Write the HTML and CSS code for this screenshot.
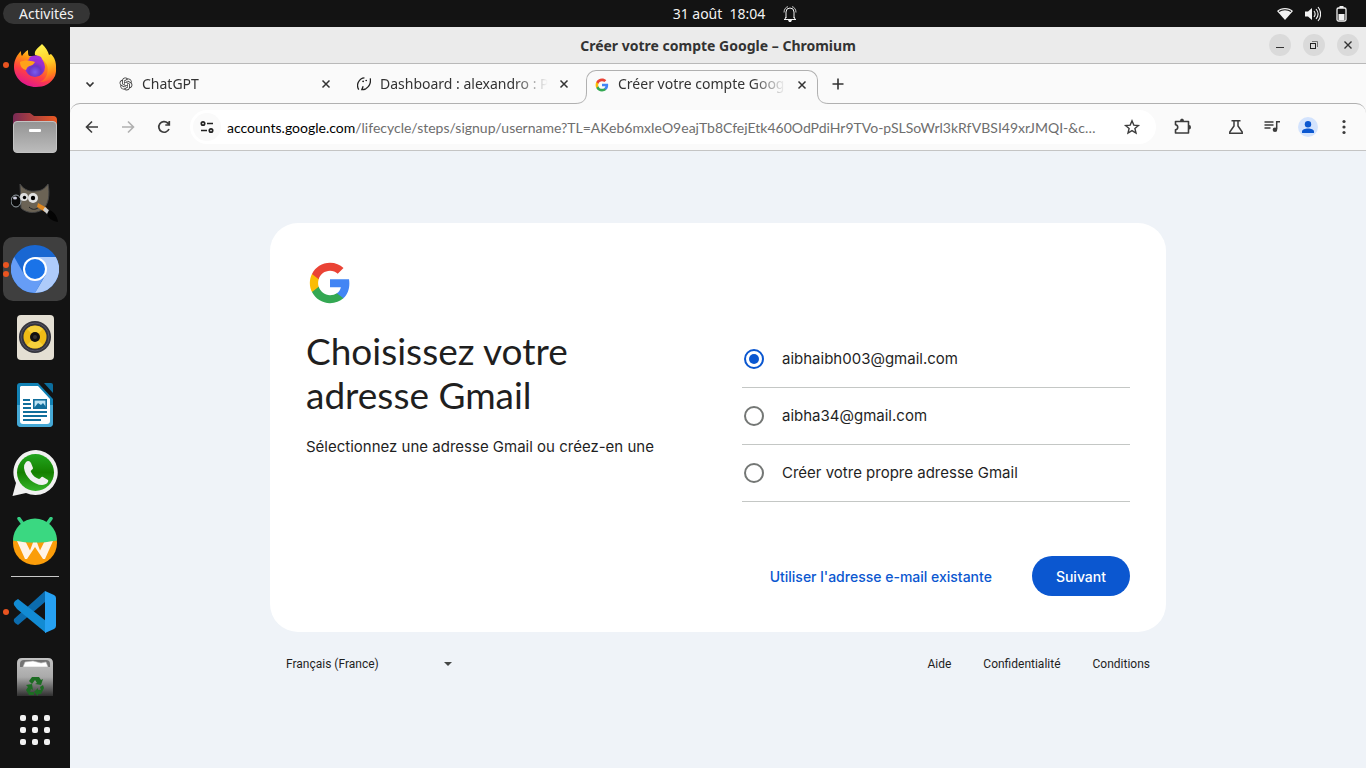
FILE: index.html
```html
<!DOCTYPE html>
<html lang="fr">
<head>
<meta charset="utf-8">
<meta name="viewport" content="width=device-width, initial-scale=1">
<title>Créer votre compte Google</title>
<link rel="stylesheet" href="styles.css">
</head>
<body>
<div class="desktop">
  <header class="topbar">
    <button class="activities" type="button">Activités</button>
    <div class="clock">
      <time>31 août&nbsp; 18:04</time>
      <svg class="bell" viewBox="0 0 14 16" aria-hidden="true"><g fill="none" stroke="#f2f2f2"><path d="M3 12V6a4 4 0 0 1 8 0v6M1 13.500h12M2 13l1-2M12 13l-1-2"/><path d="M1 6.500C1 3 3 1 5 .7M13 6.500C13 3 11 1 9 .7" stroke-width=".8"/></g><path d="M5 14h4l-1 2H6z" fill="#f2f2f2"/></svg>
    </div>
    <div class="status">
      <svg width="16" height="16" viewBox="0 0 16 16"><path d="M0 5C4 1 12 1 16 5L8 14z" fill="#f2f2f2"/><path d="M2 5.500C5 3.200 11 3.200 14 5.500" fill="none" stroke="#131313" stroke-width="1.100"/></svg>
      <svg width="16" height="16" viewBox="0 0 16 16"><path d="M0 5.500h3L7 2v12l-4-3.500H0z" fill="#f2f2f2"/><path d="M9 5c1.500 2 1.500 4 0 6M11 3c2.500 3 2.500 7 0 10M13 1c3.500 4 3.500 10 0 14" fill="none" stroke="#f2f2f2" stroke-width="1.100"/></svg>
      <svg width="16" height="16" viewBox="0 0 16 16"><rect x="4" y="2" width="9" height="13" rx="1.500" fill="none" stroke="#f2f2f2" stroke-width="1.300"/><path d="M6.500 0h4v2h-4zM5.500 8h6v6h-6z" fill="#f2f2f2"/></svg>
    </div>
  </header>

  <nav class="dock" aria-label="Applications">
    <button class="app running" type="button" aria-label="Firefox">
      <svg viewBox="0 0 48 48">
        <defs>
          <linearGradient id="fx" x1=".8" y1=".1" x2=".35" y2="1"><stop offset="0" stop-color="#fff44f"/><stop offset=".3" stop-color="#ff980e"/><stop offset=".65" stop-color="#ff3f45"/><stop offset="1" stop-color="#e01590"/></linearGradient>
          <radialGradient id="fxp" cx=".5" cy=".75"><stop offset="0" stop-color="#7a5cf0"/><stop offset=".6" stop-color="#6a35c4"/><stop offset="1" stop-color="#9b2fd0"/></radialGradient>
          <linearGradient id="fxy" x1=".4" y1="0" x2=".6" y2="1"><stop offset="0" stop-color="#fff44f"/><stop offset=".5" stop-color="#ffcb25"/><stop offset=".8" stop-color="#ff8a16"/><stop offset="1" stop-color="#ff4a3c"/></linearGradient>
        </defs>
        <path d="M10 10c0 2 0 4 1 5 2-3 3-4 6-6 0 3 0 5 1 6h21l4 4c2 5 3 11 1 16-4 8-11 11-19 11C13 46 3 37 3 26 3 19 6 14 10 10z" fill="url(#fx)"/>
        <path d="M31 3c4 4 6 7 7 11l2-1c4 4 5 8 5 13 0 10-7 15-16 15 7-3 9-11 7-17-2-5-7-8-12-10-1-5 3-7 7-11z" fill="url(#fxy)"/>
        <circle cx="24" cy="26" r="10" fill="url(#fxp)"/>
        <path d="M18 17c3-3 8-3 12-1l3 6c-5-5-10-4-13-2z" fill="#a430dc"/>
        <path d="M9 21c4-2 9-2 15 0-3 5-6 3-8 6l-1 2c-4-1-6-4-6-8z" fill="#ffa21a"/>
      </svg>
      <span class="dots"><i></i></span>
    </button>
    <button class="app" type="button" aria-label="Fichiers">
      <svg viewBox="0 0 48 48">
        <defs><linearGradient id="fd"><stop offset="0" stop-color="#782a55"/><stop offset="1" stop-color="#eb5a22"/></linearGradient><linearGradient id="fg" x1="0" y1="0" x2="0" y2="1"><stop offset="0" stop-color="#939393"/><stop offset="1" stop-color="#bcbcbc"/></linearGradient></defs>
        <path d="M2 8q0-4 4-4h13l4 3h19q4 0 4 4v14H2z" fill="url(#fd)"/>
        <rect x="2.500" y="12.500" width="43" height="31" rx="3.500" fill="url(#fg)" stroke="#c3c3c3"/>
        <rect x="18" y="20" width="12" height="3" rx="1" fill="#fff"/>
      </svg>
    </button>
    <button class="app" type="button" aria-label="GIMP">
      <svg viewBox="0 0 48 48">
        <path d="M9 7c4 6 10 8 16 7 6 0 9-3 12-7 2 10 1 21-6 26-7 4-16 3-21-2z" fill="#6b6355" stroke="#454545"/>
        <ellipse cx="5" cy="24" rx="5" ry="6" fill="#0a0a0a" stroke="#9aa5ab"/><ellipse cx="4" cy="21" rx="2" ry="1.500" fill="#ccd"/>
        <circle cx="13" cy="20" r="4" fill="#dedede"/><circle cx="22" cy="21" r="5" fill="#e2e2e2"/>
        <circle cx="13.500" cy="20.500" r="1.700"/><circle cx="22" cy="21" r="2.200"/>
        <path d="M18 30c4 4 8 2 10 0" stroke="#222" fill="none"/>
        <path d="M27 26l9 5-2 4-8-5z" fill="#e08820"/><path d="M34 30l5 4-2 4-5-5z" fill="#cfcfcf"/>
        <path d="M38 33c4 1 8 5 9 12-6-1-10-4-11-8z" fill="#040404"/>
      </svg>
    </button>
    <button class="app current" type="button" aria-label="Chromium">
      <svg viewBox="0 0 48 48">
        <circle cx="24" cy="24" r="24" fill="#1967d2"/>
        <path d="M3.200 12A24 24 0 0 0 24 48L34 30 24 24 14 31z" fill="#669df6"/>
        <path d="M24 12h20.800A24 24 0 0 1 24 48L34.500 30z" fill="#aecbfa"/>
        <circle cx="24" cy="24" r="12" fill="#fff"/><circle cx="24" cy="24" r="10" fill="#1a73e8"/>
      </svg>
      <span class="dots"><i></i><i></i></span>
    </button>
    <button class="app" type="button" aria-label="Rhythmbox">
      <svg viewBox="0 0 48 48">
        <rect x="6" y="2" width="37" height="45" rx="4" fill="#e4dfd3"/><circle cx="24" cy="24" r="16" fill="#34343c"/><circle cx="24" cy="24" r="14" fill="none" stroke="#565565"/>
        <circle cx="24" cy="24" r="11.500" fill="#efbb16"/><path d="M24 24l-8 8a11.500 11.500 0 0 0 16 0zM24 24l-8-8a11.500 11.500 0 0 1 16 0z" fill="#f6d13c"/><circle cx="24" cy="24" r="5" fill="#111"/><circle cx="24" cy="24" r="2" fill="#333"/>
      </svg>
    </button>
    <button class="app" type="button" aria-label="LibreOffice Writer">
      <svg viewBox="0 0 48 48">
        <path d="M9 2h18l15 16v24q0 4-4 4H10q-4 0-4-4V5q0-3 3-3z" fill="#1282b5"/><path d="M6 24h36v18q0 4-4 4H10q-4 0-4-4z" fill="#46a9d6"/>
        <path d="M10 5h17l12 13v22q0 3-3 3H12q-3 0-3-3V6z" fill="#fff"/>
        <path d="M33 2h7q2 0 2 2v8z" fill="#0c6e9e"/>
        <path d="M12 18h7v2h-7zM12 22h8v2h-8zM12 26h8v2h-8zM12 30h24v2H12zM12 34h24v2H12zM12 38h18v2H12z" fill="#116e9b"/>
        <rect x="22.800" y="18.800" width="12.400" height="8.400" fill="#bde4f5" stroke="#116e9b" stroke-width="1.600"/><path d="M23 27l4-5 3 2 2-2 3 4v1z" fill="#116e9b"/>
      </svg>
    </button>
    <button class="app" type="button" aria-label="WhatsApp">
      <svg viewBox="0 0 48 48">
        <defs><linearGradient id="wa" x1="0" y1="0" x2="0" y2="1"><stop offset="0" stop-color="#23a620"/><stop offset=".5" stop-color="#158000"/><stop offset="1" stop-color="#35b52a"/></linearGradient></defs>
        <path d="M25 1a22.500 22.500 0 1 1-10 43L1.500 47 5 34A22.500 22.500 0 0 1 25 1z" fill="#f1f1f1"/><circle cx="24.500" cy="23.500" r="18.500" fill="url(#wa)"/>
        <path d="M15 13c2-2 4-1 5 1l2 5c0 2-3 2-2 4 2 4 5 6 8 7 2 0 2-3 4-2l5 3c1 1-1 5-6 5-8 0-17-8-18-17q0-4 2-6z" fill="#f1f1f1"/>
      </svg>
    </button>
    <button class="app" type="button" aria-label="Waydroid">
      <svg viewBox="0 0 48 48">
        <path d="M8 1.500l5 7M40 1.500l-5 7" stroke="#35ce82" stroke-width="3.500" stroke-linecap="round"/>
        <circle cx="24" cy="26" r="22" fill="#fb9d0a"/><path d="M2 23.500a22 22 0 0 1 44 0c-14 3-30 3-44 0z" fill="#3ad881"/>
        <path d="M6 24l9 1.500 4 8 3-8h4l3 8 4-8 9-1.500-8 18h-2l-8-12-8 12h-2z" fill="#fff4e8"/>
      </svg>
    </button>
    <hr class="divider">
    <button class="app running" type="button" aria-label="Visual Studio Code">
      <svg viewBox="0 0 48 48">
        <path d="M3 31q-1 2 1 4l3 2 27-23V3z" fill="#0c6cae"/><path d="M3 17q-1-2 1-4l3-2 28 22v12L6 21z" fill="#128bd3"/>
        <path d="M34 3l9 4q2 1 2 3v28q0 2-2 3l-9 4z" fill="#26a1f2"/>
      </svg>
      <span class="dots"><i></i></span>
    </button>
    <button class="app trash" type="button" aria-label="Corbeille">
      <svg viewBox="0 0 48 40">
        <defs><linearGradient id="tr" x1="0" y1="0" x2="0" y2="1"><stop offset="0" stop-color="#c3c3c3"/><stop offset=".5" stop-color="#aaa"/><stop offset="1" stop-color="#303030"/></linearGradient></defs>
        <path d="M6 40V7q0-5 5-5h26q5 0 5 5v33z" fill="url(#tr)"/><path d="M9 11V8q0-4 4-4h22q4 0 4 4v3z" fill="#747474"/><path d="M12 11l2-5 8-1 8 2 5-1 2 5z" fill="#fff" stroke="#bbb" stroke-width=".6"/>
        <g fill="#1d6c23"><path d="M18 25l3-4h7l2 3 2-1-2 6-6-1 2-1-2-3-3 4z"/><path d="M15 29l6-1 1 6-2-1-1 3h4v3h-5l-3-5 2-3z"/><path d="M29 31l3-2 1 3-3 6h-3v2l-4-4 4-4v2h3z"/></g>
      </svg>
    </button>
    <button class="apps-grid" type="button" aria-label="Afficher les applications"><i></i><i></i><i></i><i></i><i></i><i></i><i></i><i></i><i></i></button>
  </nav>

  <section class="window">
    <div class="titlebar">
      <div class="window-title">Créer votre compte Google – Chromium</div>
      <div class="window-buttons">
        <button type="button" aria-label="Réduire"><svg viewBox="0 0 22 22"><path d="M7 13.500h8" stroke="#333"/></svg></button>
        <button type="button" aria-label="Restaurer"><svg viewBox="0 0 22 22"><path d="M9 7.500h5.500V13" fill="none" stroke="#777"/><rect x="7.500" y="9.500" width="5" height="5" fill="none" stroke="#222"/></svg></button>
        <button type="button" aria-label="Fermer"><svg viewBox="0 0 22 22"><path d="M7.500 7.500l7 7m0-7l-7 7" stroke="#333" stroke-width="1.400"/></svg></button>
      </div>
    </div>

    <div class="tabstrip">
      <button class="tool" type="button" aria-label="Rechercher des onglets"><svg viewBox="0 0 20 20"><path d="M6.500 8.500L10 12l3.500-3.500" fill="none" stroke="#333" stroke-width="1.700"/></svg></button>
      <div class="tab">
        <svg class="favicon" viewBox="-1 -1 26 26" fill="#3c3c3c"><path d="M22.282 9.821a5.985 5.985 0 0 0-.516-4.910 6.046 6.046 0 0 0-6.510-2.900A6.065 6.065 0 0 0 4.981 4.182a5.985 5.985 0 0 0-3.998 2.900 6.046 6.046 0 0 0 .743 7.097 5.980 5.980 0 0 0 .510 4.911 6.051 6.051 0 0 0 6.515 2.900A5.985 5.985 0 0 0 13.260 24a6.056 6.056 0 0 0 5.772-4.206 5.990 5.990 0 0 0 3.998-2.900 6.056 6.056 0 0 0-.748-7.073zM13.260 22.430a4.476 4.476 0 0 1-2.876-1.040l.141-.081 4.779-2.758a.795.795 0 0 0 .393-.681v-6.737l2.020 1.169a.071.071 0 0 1 .038.052v5.583a4.504 4.504 0 0 1-4.495 4.493zM3.600 18.304a4.470 4.470 0 0 1-.535-3.014l.142.085 4.783 2.759a.771.771 0 0 0 .781 0l5.843-3.369v2.332a.080.080 0 0 1-.033.062L9.740 19.950a4.500 4.500 0 0 1-6.140-1.646zM2.341 7.896a4.485 4.485 0 0 1 2.366-1.973V11.600a.766.766 0 0 0 .388.677l5.815 3.354-2.020 1.169a.076.076 0 0 1-.071 0l-4.830-2.787A4.504 4.504 0 0 1 2.341 7.872zm16.597 3.855l-5.833-3.387L15.119 7.200a.076.076 0 0 1 .071 0l4.830 2.791a4.494 4.494 0 0 1-.676 8.105v-5.678a.790.790 0 0 0-.407-.667zm2.010-3.023l-.141-.085-4.774-2.782a.776.776 0 0 0-.785 0L9.409 9.230V6.897a.066.066 0 0 1 .028-.061l4.830-2.787a4.500 4.500 0 0 1 6.680 4.660zm-12.640 4.135l-2.020-1.164a.080.080 0 0 1-.038-.057V6.075a4.500 4.500 0 0 1 7.375-3.453l-.142.080L8.704 5.460a.795.795 0 0 0-.393.681zm1.097-2.365l2.602-1.500 2.607 1.500v2.999l-2.597 1.500-2.607-1.500z"/></svg>
        <span class="tab-title">ChatGPT</span>
        <button class="close" type="button" aria-label="Fermer l’onglet"><svg viewBox="0 0 16 16"><path d="M4.500 4.500l7 7m0-7l-7 7" stroke="#333" stroke-width="1.500"/></svg></button>
      </div>
      <div class="tab">
        <svg class="favicon" viewBox="0 0 16 16"><g fill="none" stroke="#222" stroke-width="1.500"><path d="M8.500 1C5.500 1 3 3 1.500 6 0 9 .5 12 2 14.500"/><path d="M15.200 1.500c.8 5-1.200 9.500-5.200 12-1.500.8-3 1-4.500 1l1.500-4"/></g><circle cx="7" cy="5" r=".9"/><circle cx="10.500" cy="4" r=".9"/></svg>
        <span class="tab-title">Dashboard : alexandro : P</span>
        <button class="close" type="button" aria-label="Fermer l’onglet"><svg viewBox="0 0 16 16"><path d="M4.500 4.500l7 7m0-7l-7 7" stroke="#333" stroke-width="1.500"/></svg></button>
      </div>
      <div class="tab active">
        <svg class="flare flare-left" viewBox="0 0 12 12"><path d="M0 11.500C8 11.500 11.500 8 11.500 0H12v12H0z" fill="#fafafa"/><path d="M0 11.500C8 11.500 11.500 8 11.500 0" fill="none" stroke="#b0b0b0"/></svg>
        <svg class="flare flare-right" viewBox="0 0 12 12"><path d="M12 11.500C4 11.500 .5 8 .5 0H0v12h12z" fill="#fafafa"/><path d="M12 11.500C4 11.500 .5 8 .5 0" fill="none" stroke="#b0b0b0"/></svg>
        <svg class="favicon" viewBox="2 2 44 44"><use href="#google-g"/></svg>
        <span class="tab-title">Créer votre compte Goog</span>
        <button class="close" type="button" aria-label="Fermer l’onglet"><svg viewBox="0 0 16 16"><path d="M4.500 4.500l7 7m0-7l-7 7" stroke="#333" stroke-width="1.500"/></svg></button>
      </div>
      <button class="tool" type="button" aria-label="Nouvel onglet"><svg viewBox="0 0 20 20"><path d="M10 4.500v11M4.500 10h11" stroke="#333" stroke-width="1.600"/></svg></button>
    </div>

    <div class="toolbar">
      <div class="tools">
        <button class="tool" type="button" aria-label="Retour"><svg viewBox="0 0 20 20"><path d="M16 10H5M10 4.500L4.500 10l5.500 5.500" fill="none" stroke="#3c3c3c" stroke-width="1.600"/></svg></button>
        <button class="tool" type="button" aria-label="Avancer"><svg viewBox="0 0 20 20"><path d="M4 10h11M10 4.500l5.500 5.500-5.500 5.500" fill="none" stroke="#b0b0b0" stroke-width="1.600"/></svg></button>
        <button class="tool" type="button" aria-label="Actualiser"><svg viewBox="0 0 20 20"><path d="M15 12a5.300 5.300 0 1 1-1.300-6L15 7.200M15.300 4v4h-4" fill="none" stroke="#3c3c3c" stroke-width="1.700"/></svg></button>
      </div>
      <div class="omnibox">
        <button class="tool site" type="button" aria-label="Informations sur le site"><svg viewBox="0 0 20 20"><g fill="none" stroke="#222" stroke-width="1.700"><circle cx="6" cy="6.500" r="1.700"/><path d="M10 6.500h6M4 13.500h6"/><circle cx="14" cy="13.500" r="1.700"/></g></svg></button>
        <label class="address"><span>accounts.google.com</span><input type="text" aria-label="Adresse" value="/lifecycle/steps/signup/username?TL=AKeb6mxIeO9eajTb8CfejEtk460OdPdiHr9TVo-pSLSoWrl3kRfVBSI49xrJMQI-&amp;c…"></label>
        <button class="tool" type="button" aria-label="Ajouter aux favoris"><svg viewBox="0 0 20 20"><path d="M10 3.800l1.800 4.300 4.600.4-3.500 3 1.100 4.600-4-2.500-4 2.500 1.100-4.600-3.500-3 4.600-.4z" fill="none" stroke="#3c3c3c" stroke-width="1.400"/></svg></button>
      </div>
      <button class="tool" type="button" aria-label="Extensions"><svg viewBox="0 0 20 20"><path d="M3.500 4.500h13V16h-13v-3.200c3-.4 3-4.700 0-5.100z" fill="none" stroke="#3c3c3c" stroke-width="1.600" stroke-linejoin="round"/><path d="M8 4q0-2.500 2-2.500T12 4zM17 8q2 0 2 2.200T17 12.400z" fill="#3c3c3c"/></svg></button>
      <div class="tools tools-end">
        <button class="tool" type="button" aria-label="Expériences"><svg viewBox="0 0 20 20"><path d="M5.500 3.800h9M8 4v5L3.800 15v1.200h12.400V15L12 9V4" fill="none" stroke="#3c3c3c" stroke-width="1.500"/></svg></button>
        <button class="tool" type="button" aria-label="Contrôle multimédia"><svg viewBox="0 0 20 20"><path d="M2.500 5h9M2.500 8h9M2.500 11h6M14.700 12V4.800H18" fill="none" stroke="#3c3c3c" stroke-width="1.500"/><circle cx="13" cy="12.800" r="2.300" fill="#3c3c3c"/></svg></button>
        <button class="tool" type="button" aria-label="Profil"><svg viewBox="0 0 20 20"><circle cx="10" cy="10" r="10" fill="#d3e3fd"/><circle cx="10" cy="7.300" r="3.200" fill="#0b57d0"/><path d="M4 16v-1.500C4 12.500 7 11.500 10 11.500s6 1 6 3V16z" fill="#0b57d0"/></svg></button>
        <button class="tool" type="button" aria-label="Menu"><svg viewBox="0 0 20 20" fill="#3c3c3c"><circle cx="10" cy="4.500" r="1.600"/><circle cx="10" cy="10" r="1.600"/><circle cx="10" cy="15.500" r="1.600"/></svg></button>
      </div>
    </div>

    <main class="page">
      <form class="card">
        <svg class="logo" viewBox="0 0 48 48" role="img" aria-label="Google">
          <g id="google-g"><path fill="#4285F4" d="M45.120 24.500c0-1.560-.14-3.060-.4-4.500H24v8.510h11.840c-.51 2.750-2.060 5.080-4.390 6.640v5.520h7.110c4.160-3.830 6.560-9.470 6.560-16.170z"/><path fill="#34A853" d="M24 46c5.940 0 10.920-1.970 14.560-5.330l-7.110-5.520c-1.970 1.320-4.490 2.100-7.450 2.100-5.730 0-10.580-3.870-12.310-9.070H4.340v5.700C7.960 41.070 15.400 46 24 46z"/><path fill="#FBBC05" d="M11.690 28.180C11.250 26.860 11 25.450 11 24s.25-2.860.69-4.180v-5.700H4.340C2.850 17.090 2 20.450 2 24c0 3.550.85 6.910 2.340 9.880l7.350-5.700z"/><path fill="#EA4335" d="M24 10.750c3.230 0 6.130 1.110 8.410 3.290l6.310-6.310C34.910 4.180 29.930 2 24 2 15.400 2 7.960 6.930 4.340 14.120l7.350 5.700c1.730-5.200 6.580-9.070 12.310-9.070z"/></g>
        </svg>
        <div class="columns">
          <div class="intro">
            <h1>Choisissez votre adresse Gmail</h1>
            <p>Sélectionnez une adresse Gmail ou créez-en une</p>
          </div>
          <div class="choices">
            <label><input type="radio" name="address" checked><span>aibhaibh003@gmail.com</span></label>
            <label><input type="radio" name="address"><span>aibha34@gmail.com</span></label>
            <label><input type="radio" name="address"><span>Créer votre propre adresse Gmail</span></label>
          </div>
        </div>
        <div class="actions">
          <button class="text-button" type="button">Utiliser l'adresse e-mail existante</button>
          <button class="primary" type="button">Suivant</button>
        </div>
      </form>
      <footer class="footer">
        <div class="language">
          <select aria-label="Langue"><option>Français (France)</option></select>
          <svg viewBox="0 0 8 4" aria-hidden="true"><path d="M0 0h8L4 4z" fill="#444746"/></svg>
        </div>
        <div class="links"><a href="#aide">Aide</a><a href="#confidentialite">Confidentialité</a><a href="#conditions">Conditions</a></div>
      </footer>
    </main>
  </section>
</div>
</body>
</html>
```
FILE: styles.css
```css
* { box-sizing: border-box; }

body {
  margin: 0;
  font-family: "Noto Sans", "Open Sans", sans-serif;
  font-size: 14px;
  color: #333;
}

button {
  border: 0;
  padding: 0;
  background: none;
  color: inherit;
  font: inherit;
  cursor: pointer;
}

svg { display: block; }

.desktop {
  display: grid;
  grid-template: 27px 1fr / 70px 1fr;
  min-height: 100vh;
  background: #131313;
}

/* GNOME top bar */
.topbar {
  grid-column: 1 / -1;
  display: grid;
  grid-template-columns: 70px 1fr auto 1fr;
  align-items: center;
  color: #f2f2f2;
}

.activities {
  justify-self: start;
  margin-left: 3px;
  padding: 0 16px;
  border-radius: 11px;
  background: #353535;
  line-height: 21px;
  white-space: nowrap;
}

.clock {
  grid-column: 3;
  display: flex;
  align-items: center;
  gap: 18px;
  padding-left: 34px;
}

.clock time { line-height: 18px; }

.bell { width: 14px; height: 16px; }

.status {
  display: flex;
  justify-content: flex-end;
  gap: 12px;
  padding-right: 17px;
}

/* Dock */
.dock {
  display: flex;
  flex-direction: column;
  align-items: center;
  gap: 4px;
  padding: 6px 3px;
}

.app {
  position: relative;
  display: grid;
  place-items: center;
  width: 64px;
  height: 64px;
  border-radius: 10px;
}

.app > svg { width: 48px; }
.app.current { background: #3f3f3f; }
.trash { height: 48px; align-items: end; }

.dots {
  position: absolute;
  left: 0;
  top: 0;
  height: 100%;
  display: flex;
  flex-direction: column;
  justify-content: center;
  gap: 3px;
}

.dots i {
  width: 6px;
  height: 6px;
  border-radius: 50%;
  background: #e95420;
}

.divider {
  width: 48px;
  height: 1px;
  margin: -1px 0;
  border: 0;
  background: #c8c8c8;
}

.apps-grid {
  display: grid;
  grid-template-columns: repeat(3, 6px);
  gap: 6px;
  margin-top: 15px;
}

.apps-grid i {
  height: 6px;
  border-radius: 2px;
  background: #f2f2f2;
}

/* Window frame */
.window {
  display: flex;
  flex-direction: column;
  min-width: 0;
  background: #fafafa;
}

.titlebar {
  display: grid;
  grid-template-columns: 1fr auto 1fr;
  align-items: center;
  height: 37px;
  padding: 0 7px;
  border-bottom: 1px solid #b9b9b9;
  background: #ebebeb;
}

.window-title { grid-column: 2; font-weight: 700; }

.window-buttons {
  display: flex;
  justify-content: flex-end;
  gap: 12px;
}

.window-buttons button {
  width: 22px;
  height: 22px;
  border-radius: 50%;
  background: #dadada;
}

.tabstrip {
  display: flex;
  align-items: flex-end;
  gap: 6px;
  padding: 6px 6px 0;
}

.tool {
  flex: none;
  display: grid;
  place-items: center;
  width: 28px;
  height: 28px;
  border-radius: 50%;
}

.tool svg { width: 20px; height: 20px; }
.tabstrip > .tool { margin-bottom: 5px; }

.tab {
  position: relative;
  flex: 0 1 232px;
  min-width: 0;
  display: flex;
  align-items: center;
  gap: 8px;
  height: 33px;
  padding: 0 8px 5px;
}

.tab.active {
  height: 34px;
  margin-bottom: -1px;
  padding: 0 7px 6px;
  border: 1px solid #b0b0b0;
  border-bottom: 0;
  border-radius: 10px 10px 0 0;
  background: #fafafa;
}

.flare {
  position: absolute;
  bottom: 0;
  width: 12px;
  height: 12px;
}

.flare-left { right: 100%; }
.flare-right { left: 100%; }

.favicon { flex: none; width: 16px; height: 16px; padding: 1px; }

.tab-title {
  flex: 1;
  padding-bottom: 2px;
  overflow: hidden;
  white-space: nowrap;
  -webkit-mask-image: linear-gradient(to right, #000 calc(100% - 34px), transparent);
  mask-image: linear-gradient(to right, #000 calc(100% - 34px), transparent);
}

.close { flex: none; width: 16px; height: 16px; }

.toolbar {
  display: flex;
  align-items: center;
  gap: 12px;
  height: 48px;
  padding: 0 8px;
  border-top: 1px solid #b0b0b0;
  border-bottom: 1px solid #c4c4c4;
  border-radius: 10px 10px 0 0;
}

.tools { display: flex; gap: 8px; }
.tools-end { margin-left: 14px; }

.omnibox {
  flex: 1;
  min-width: 0;
  display: flex;
  align-items: center;
  gap: 6px;
  height: 34px;
  padding: 0 10px 0 3px;
  border-radius: 17px;
  background: #fff;
}

.site { background: #fafafa; }

.address {
  flex: 1;
  min-width: 0;
  display: flex;
  align-items: center;
  font-family: Lato, "Noto Sans", sans-serif;
  color: #000;
}

.address input {
  flex: 1;
  min-width: 0;
  padding: 0;
  border: 0;
  outline: 0;
  background: none;
  color: #6e6e6e;
  font: inherit;
  text-overflow: ellipsis;
}

/* Sign-up page */
.page {
  flex: 1;
  padding: 72px 24px;
  background: #eff3f8;
  color: #1f1f1f;
  font-family: Inter, Roboto, sans-serif;
}

.card {
  max-width: 896px;
  margin: 0 auto;
  padding: 36px;
  border-radius: 28px;
  background: #fff;
}

.logo { width: 48px; height: 48px; }

.logo g { transform: translate(2px, 2px) scale(.917); }

.columns {
  display: grid;
  grid-template-columns: 1fr 1fr;
  gap: 48px;
  margin-top: 24px;
}

.intro h1 {
  max-width: 320px;
  margin: -2px 0 0;
  font: 400 37px/44px Lato, sans-serif;
}

.intro p {
  margin: 18px 0 0;
  font-size: 15px;
  line-height: 24px;
}

.choices label {
  display: flex;
  align-items: center;
  gap: 18px;
  height: 57px;
  padding-left: 2px;
  border-bottom: 1px solid #c4c7c5;
  font-size: 15px;
}

.choices span { padding-bottom: 2px; }

.choices input {
  appearance: none;
  display: grid;
  place-items: center;
  width: 20px;
  height: 20px;
  margin: 0;
  border: 2px solid #747775;
  border-radius: 50%;
}

.choices input:checked { border-color: #0b57d0; }

.choices input:checked::before {
  content: "";
  width: 10px;
  height: 10px;
  border-radius: 50%;
  background: #0b57d0;
}

.actions {
  display: flex;
  justify-content: flex-end;
  gap: 24px;
  margin-top: 54px;
  font-weight: 500;
}

.actions button { height: 40px; border-radius: 20px; }
.text-button { padding: 0 16px; color: #0b57d0; }
.actions .primary { padding: 0 24px; background: #0b57d0; color: #fff; }

.footer {
  display: flex;
  justify-content: space-between;
  align-items: center;
  max-width: 896px;
  margin: 0 auto;
  padding: 16px 16px 0;
  font-family: Roboto, sans-serif;
  font-size: 12px;
}

.language {
  display: grid;
  grid-template-columns: 166px;
  align-items: center;
  height: 32px;
}

.language > * { grid-area: 1 / 1; }
.language svg { justify-self: end; width: 8px; pointer-events: none; }

.language select {
  appearance: none;
  height: 32px;
  padding: 0;
  border: 0;
  background: none;
  color: inherit;
  font: inherit;
}

.links { display: flex; gap: 32px; }
.links a { color: inherit; text-decoration: none; }
```
